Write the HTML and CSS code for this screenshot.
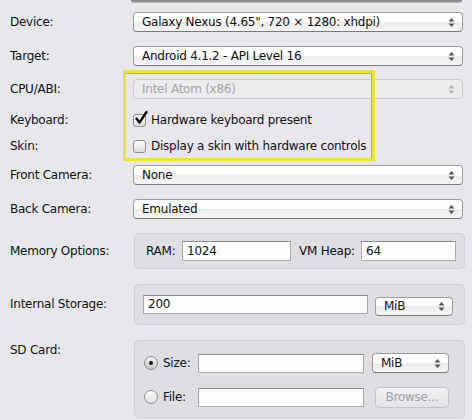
FILE: index.html
```html
<!DOCTYPE html>
<html>
<head>
<meta charset="utf-8">
<link rel="stylesheet" href="styles.css">
</head>
<body>
<div class="panel">
  <div class="stub"></div>

  <div class="row r-device">
    <span class="label">Device:</span>
    <div class="combo wide"><span class="val">Galaxy Nexus (4.65", 720 × 1280: xhdpi)</span><svg class="arrows" width="7" height="11" viewBox="0 0 7 11"><path d="M3.5 1 L6.5 4.5 L0.5 4.5 Z M0.5 6.5 L6.5 6.5 L3.5 10 Z" fill="#555"/></svg></div>
  </div>

  <div class="row r-target">
    <span class="label">Target:</span>
    <div class="combo wide"><span class="val">Android 4.1.2 - API Level 16</span><svg class="arrows" width="7" height="11" viewBox="0 0 7 11"><path d="M3.5 1 L6.5 4.5 L0.5 4.5 Z M0.5 6.5 L6.5 6.5 L3.5 10 Z" fill="#555"/></svg></div>
  </div>

  <div class="row r-cpu">
    <span class="label">CPU/ABI:</span>
    <div class="combo wide disabled"><span class="val">Intel Atom (x86)</span><svg class="arrows" width="7" height="11" viewBox="0 0 7 11"><path d="M3.5 1 L6.5 4.5 L0.5 4.5 Z M0.5 6.5 L6.5 6.5 L3.5 10 Z" fill="#b4b4b4"/></svg></div>
  </div>

  <div class="row r-keyboard">
    <span class="label">Keyboard:</span>
    <span class="check checked"><svg class="tick" width="14" height="16" viewBox="0 0 14 16"><path d="M2.5 8.5 L5.5 12.5 L12.5 2" fill="none" stroke="#111" stroke-width="2.4" stroke-linecap="round" stroke-linejoin="round"/></svg></span>
    <span class="check-text">Hardware keyboard present</span>
  </div>

  <div class="row r-skin">
    <span class="label">Skin:</span>
    <span class="check"></span>
    <span class="check-text">Display a skin with hardware controls</span>
  </div>

  <div class="row r-front">
    <span class="label">Front Camera:</span>
    <div class="combo wide"><span class="val">None</span><svg class="arrows" width="7" height="11" viewBox="0 0 7 11"><path d="M3.5 1 L6.5 4.5 L0.5 4.5 Z M0.5 6.5 L6.5 6.5 L3.5 10 Z" fill="#555"/></svg></div>
  </div>

  <div class="row r-back">
    <span class="label">Back Camera:</span>
    <div class="combo wide"><span class="val">Emulated</span><svg class="arrows" width="7" height="11" viewBox="0 0 7 11"><path d="M3.5 1 L6.5 4.5 L0.5 4.5 Z M0.5 6.5 L6.5 6.5 L3.5 10 Z" fill="#555"/></svg></div>
  </div>

  <div class="row r-memory">
    <span class="label">Memory Options:</span>
    <div class="group mem">
      <span class="ilabel ram">RAM:</span>
      <span class="input ram-in">1024</span>
      <span class="ilabel heap">VM Heap:</span>
      <span class="input heap-in">64</span>
    </div>
  </div>

  <div class="row r-internal">
    <span class="label">Internal Storage:</span>
    <div class="group internal">
      <span class="input storage-in">200</span>
      <div class="combo unit unit-internal"><span class="val">MiB</span><svg class="arrows" width="7" height="11" viewBox="0 0 7 11"><path d="M3.5 1 L6.5 4.5 L0.5 4.5 Z M0.5 6.5 L6.5 6.5 L3.5 10 Z" fill="#555"/></svg></div>
    </div>
  </div>

  <div class="row r-sd">
    <span class="label sd-label">SD Card:</span>
    <div class="group sd">
      <div class="sd-row">
        <span class="radio selected"><span class="dot"></span></span>
        <span class="ilabel rlabel">Size:</span>
        <span class="input sd-in"></span>
        <div class="combo unit unit-sd"><span class="val">MiB</span><svg class="arrows" width="7" height="11" viewBox="0 0 7 11"><path d="M3.5 1 L6.5 4.5 L0.5 4.5 Z M0.5 6.5 L6.5 6.5 L3.5 10 Z" fill="#555"/></svg></div>
      </div>
      <div class="sd-row file-row">
        <span class="radio"></span>
        <span class="ilabel rlabel">File:</span>
        <span class="input sd-in"></span>
        <span class="button disabled">Browse...</span>
      </div>
    </div>
  </div>

  <div class="highlight"></div>
</div>
</body>
</html>
```

FILE: styles.css
```css
html, body {
  margin: 0;
  padding: 0;
  background: #e8e8ec;
}
body {
  font-family: "DejaVu Sans", "Lucida Grande", sans-serif;
  font-size: 12px;
  letter-spacing: -0.25px;
  color: #111;
  width: 472px;
  height: 420px;
  overflow: hidden;
}
.panel {
  position: relative;
  padding-left: 10px;
}
.stub {
  margin-left: 121px;
  width: 331px;
  height: 3px;
  background: linear-gradient(#7c7c7c, #b8b8b8);
  border-radius: 0 0 4px 4px;
}
.row {
  display: flex;
  align-items: center;
}
.label {
  width: 123px;
  flex: none;
  line-height: 15px;
}
.r-device { margin-top: 9px; }
.r-target { margin-top: 14px; }
.r-cpu { margin-top: 13px; }
.r-keyboard { margin-top: 11px; height: 20px; }
.r-skin { margin-top: 6px; height: 20px; }
.r-front { margin-top: 9px; }
.r-back { margin-top: 14px; }
.r-memory { margin-top: 14px; }
.r-internal { margin-top: 15px; }
.r-sd { margin-top: 15px; align-items: flex-start; }
.sd-label { padding-top: 3px; }

.combo {
  box-sizing: border-box;
  height: 20px;
  border: 1px solid #9c9c9c;
  border-bottom-color: #7a7a7a;
  border-radius: 4px;
  background: linear-gradient(#ffffff 0, #ffffff 50%, #ececec 50%, #f6f6f6 100%);
  display: flex;
  align-items: center;
  padding: 0 7px 0 8px;
  flex: none;
}
.combo .val { flex: 1; white-space: nowrap; }
.combo .arrows { flex: none; }
.combo.wide { width: 330px; }
.combo.disabled {
  background: #ececef;
  border-color: #cacace;
  color: #a4a4a8;
}

.check {
  box-sizing: border-box;
  width: 13px;
  height: 13px;
  border: 1px solid #8e8e8e;
  border-radius: 3px;
  background: linear-gradient(#ffffff, #dcdcdc);
  position: relative;
  flex: none;
  margin-right: 5px;
}
.check .tick {
  position: absolute;
  left: 0px;
  top: -5px;
}
.check-text { white-space: nowrap; }

.group {
  box-sizing: border-box;
  width: 331px;
  margin-left: 1px;
  border: 1px solid #d0d0d4;
  border-radius: 5px;
  background: #dfdfe3;
  display: flex;
  align-items: center;
  flex: none;
}
.group.mem { height: 36px; padding-left: 11px; }
.group.internal { height: 41px; padding-left: 8px; }
.group.sd {
  height: 78px;
  flex-direction: column;
  align-items: flex-start;
  padding: 12px 0 0 9px;
}

.ilabel { flex: none; white-space: nowrap; }
.ram { width: 36px; }
.heap { width: 62px; margin-left: 8px; }

.input {
  box-sizing: border-box;
  height: 20px;
  border: 1px solid #ababab;
  border-top-color: #8a8a8a;
  background: #fdfffc;
  padding-left: 4px;
  line-height: 18px;
  flex: none;
}
.ram-in { width: 109px; }
.heap-in { width: 95px; }
.storage-in { width: 225px; height: 19px; line-height: 17px; }
.unit-internal { width: 78px; height: 19px; margin-left: 7px; margin-top: 3px; }

.sd-row {
  display: flex;
  align-items: center;
  height: 20px;
}
.file-row { margin-top: 14px; }
.radio {
  box-sizing: border-box;
  width: 14px;
  height: 14px;
  border-radius: 50%;
  border: 1px solid #8a8a8a;
  background: linear-gradient(#ffffff, #e2e2e2);
  display: flex;
  align-items: center;
  justify-content: center;
  flex: none;
  margin-right: 5px;
}
.radio.selected {
  background: linear-gradient(#f4f4f4, #c8c8cc);
}
.radio .dot {
  width: 4px;
  height: 4px;
  border-radius: 50%;
  background: #111;
}
.rlabel { width: 35px; }
.sd-in { width: 166px; height: 19px; }
.unit-sd { width: 77px; margin-left: 8px; }
.button {
  box-sizing: border-box;
  width: 74px;
  height: 21px;
  margin-left: 11px;
  border: 1px solid #c4c4c8;
  border-radius: 4px;
  background: linear-gradient(#f2f2f4, #e4e4e8);
  display: flex;
  align-items: center;
  justify-content: center;
  flex: none;
}
.button.disabled { color: #a0a0a4; }

.highlight {
  position: absolute;
  left: 123px;
  top: 70px;
  width: 252px;
  height: 91px;
  box-sizing: border-box;
  border: 3px solid #eee23a;
  box-shadow: inset -1px 1px 0 #a8a8a8;
  pointer-events: none;
}
```
